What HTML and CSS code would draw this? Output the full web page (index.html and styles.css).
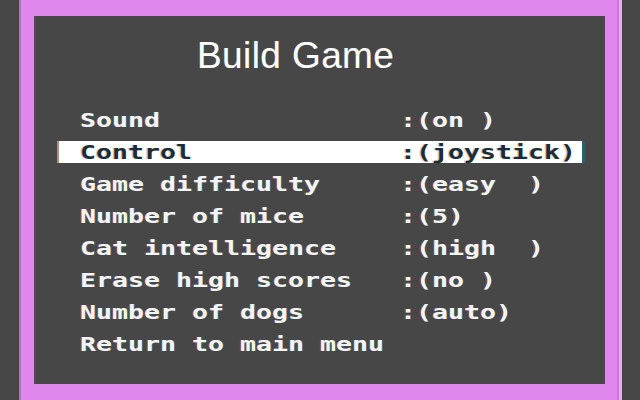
FILE: index.html
```html
<!DOCTYPE html>
<html>
<head>
<meta charset="utf-8">
<title>Build Game</title>
<link rel="stylesheet" href="styles.css">
</head>
<body>
<div class="frame">
  <main class="panel">
    <h1 class="title">Build Game</h1>
    <ul class="menu">
      <li class="row"><span class="line"><span class="label">Sound</span><span class="value">:(on )</span></span></li>
      <li class="row selected"><span class="line"><span class="label">Control</span><span class="value">:(joystick)</span></span></li>
      <li class="row"><span class="line"><span class="label">Game difficulty</span><span class="value">:(easy  )</span></span></li>
      <li class="row"><span class="line"><span class="label">Number of mice</span><span class="value">:(5)</span></span></li>
      <li class="row"><span class="line"><span class="label">Cat intelligence</span><span class="value">:(high  )</span></span></li>
      <li class="row"><span class="line"><span class="label">Erase high scores</span><span class="value">:(no )</span></span></li>
      <li class="row"><span class="line"><span class="label">Number of dogs</span><span class="value">:(auto)</span></span></li>
      <li class="row"><span class="line"><span class="label">Return to main menu</span></span></li>
    </ul>
  </main>
</div>
</body>
</html>
```
FILE: styles.css
```css
html, body {
  margin: 0;
  padding: 0;
  width: 640px;
  height: 400px;
  overflow: hidden;
  background: #464646;
}

/* pink screen border */
.frame {
  box-sizing: border-box;
  width: 603px;
  height: 400px;
  margin-left: 19px;
  padding: 16px 19px 16px 17px;
  background: #df87ed;
  box-shadow: inset 2px 0 0 #b56fc0, inset -3px 0 0 #eaa9f2, inset -5px 0 0 #c17acc;
}

.panel {
  box-sizing: border-box;
  height: 368px;
  background: #474747;
  box-shadow: -2px 0 0 #5f3f66, 2px 0 0 #5a3d5e;
  padding-top: 22px;
}

.title {
  margin: 0 0 35px 0;
  padding-left: 161px;
  font-family: "Liberation Sans", Arial, sans-serif;
  font-weight: normal;
  font-size: 37px;
  line-height: 36px;
  letter-spacing: 0.4px;
  color: #ffffff;
  text-shadow: -1px 0 rgba(150, 80, 60, 0.55), 1px 0 rgba(40, 110, 130, 0.6);
}

.menu {
  list-style: none;
  margin: 0 0 0 23px;
  padding: 0;
  display: flex;
  flex-direction: column;
  gap: 10px;
}

.row {
  box-sizing: border-box;
  width: 523px;
  height: 22px;
  padding-left: 21px;
  font-family: "DejaVu Sans Mono", monospace;
  font-weight: bold;
  font-size: 19px;
  line-height: 22px;
  color: #f4f4f4;
  white-space: pre;
}

.row .line {
  display: inline-flex;
  transform: scaleX(1.3986);
  transform-origin: left center;
  text-shadow: -1px 0 rgba(150, 80, 60, 0.55), 1px 0 rgba(40, 110, 130, 0.6);
}

.label {
  width: 20ch;
}

.selected {
  background: #ffffff;
  color: #1d2d37;
  box-shadow: -2px 0 0 #b88a7c, 3px 0 0 #2f5f6a;
}

.selected .line {
  text-shadow: -1px 0 rgba(150, 90, 70, 0.35);
}
```
